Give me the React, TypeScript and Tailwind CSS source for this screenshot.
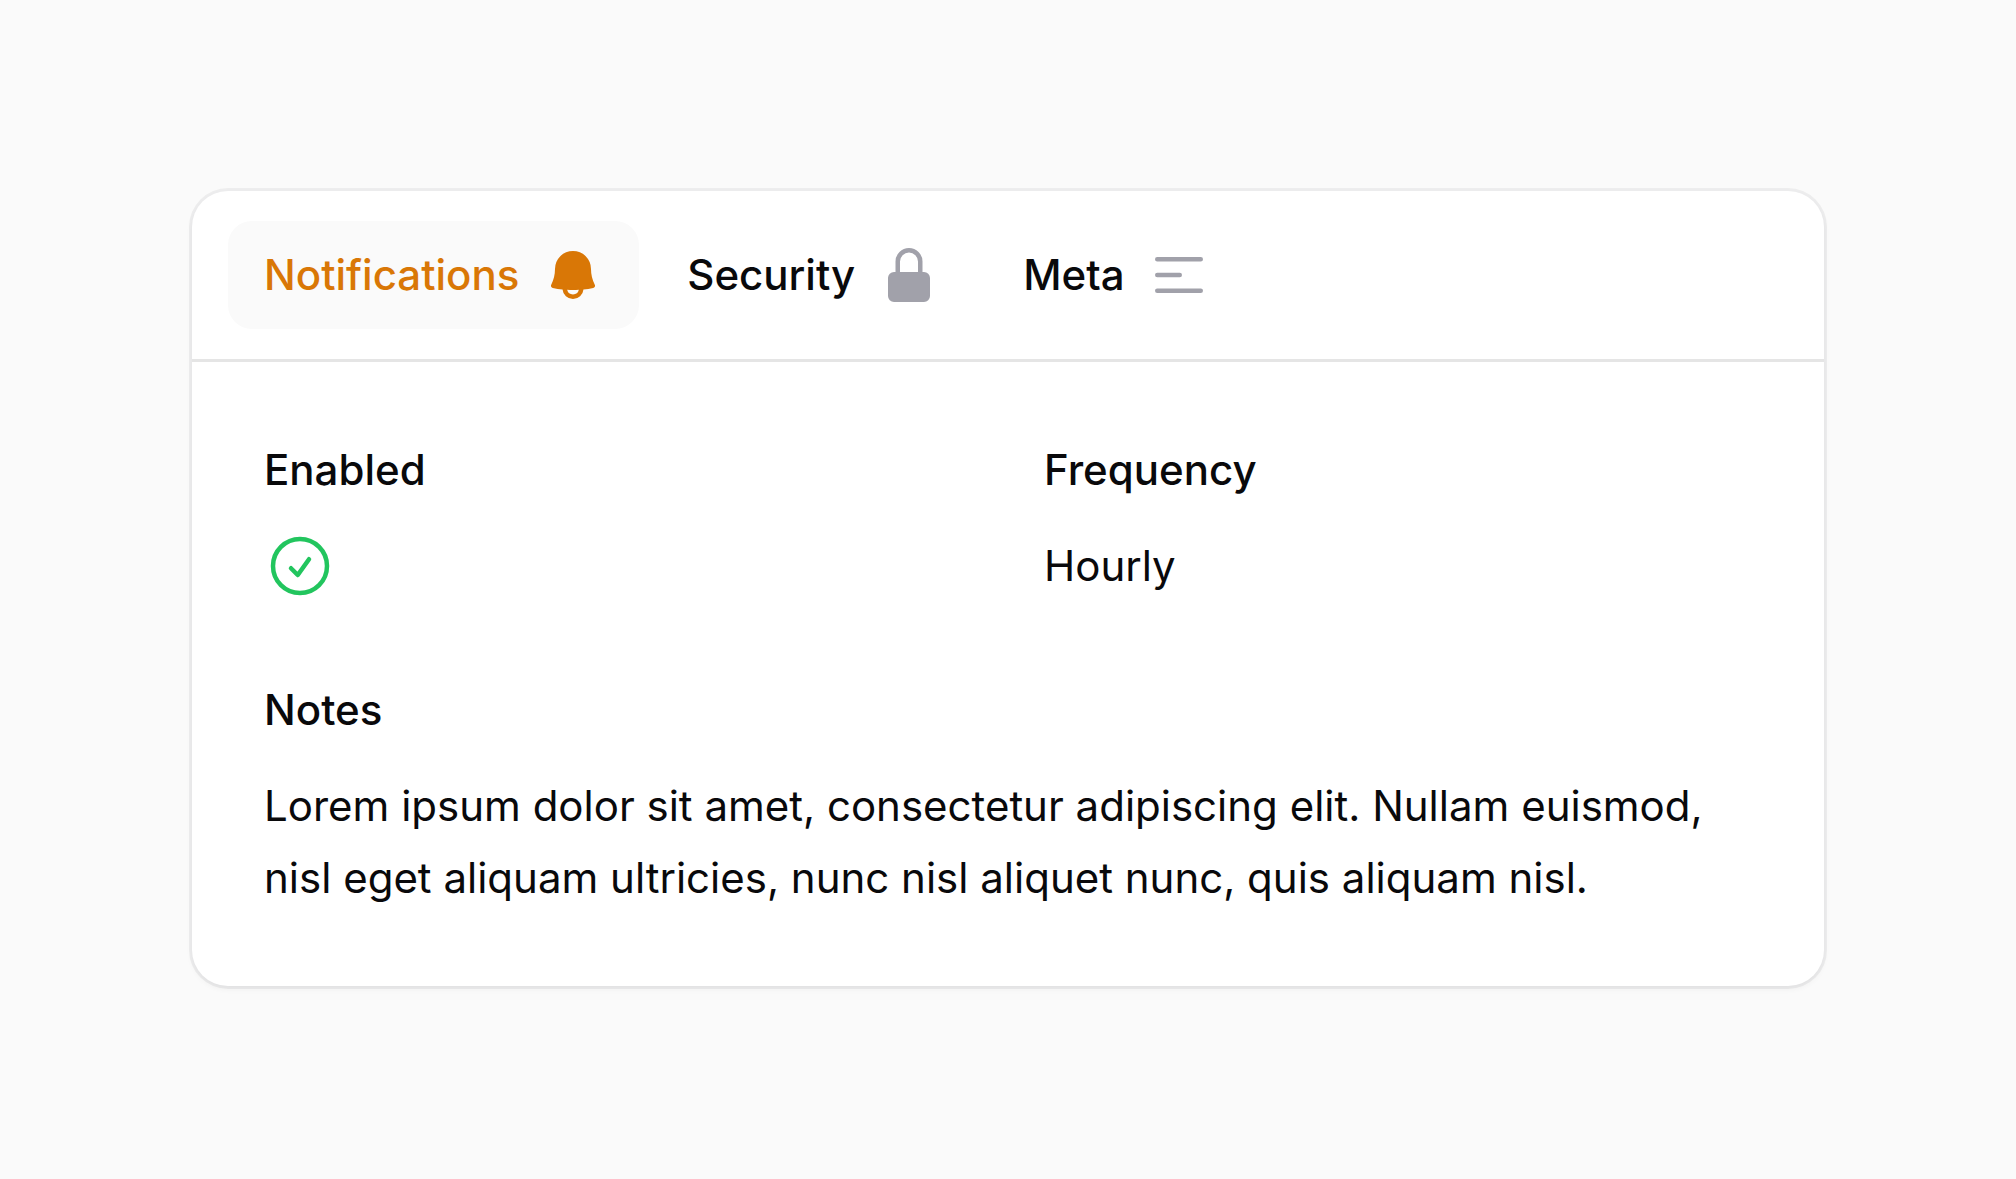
import { useState } from "react";
import clsx from "clsx";
import { HiMiniBars3CenterLeft, HiMiniBell, HiMiniLockClosed, HiOutlineCheckCircle } from "react-icons/hi2";

const TABS = [
  { id: "notifications", label: "Notifications", icon: HiMiniBell },
  { id: "security", label: "Security", icon: HiMiniLockClosed },
  { id: "meta", label: "Meta", icon: HiMiniBars3CenterLeft },
];

function Entry({ label, className, children }: { label: string; className?: string; children: React.ReactNode }) {
  return (
    <div className={clsx("grid gap-6", className)}>
      <dt className="font-medium">{label}</dt>
      <dd>{children}</dd>
    </div>
  );
}

export default function App() {
  const [active, setActive] = useState("notifications");

  return (
    <main className="min-h-screen bg-[#fafafa] px-48 py-[191px] font-['Inter',sans-serif] text-[42px] leading-[72px] text-[#09090b]">
      <div className="rounded-[36px] bg-white shadow-[0_3px_6px_0_rgb(0_0_0/0.05)] ring-3 ring-[#09090b]/5">
        <div role="tablist" aria-label="Settings" className="flex gap-3 border-b-3 border-[#e5e5e5] px-9 py-[30px]">
          {TABS.map(({ id, label, icon: Icon }) => (
            <button
              key={id}
              id={`tab-${id}`}
              type="button"
              role="tab"
              aria-selected={active === id}
              aria-controls="panel"
              onClick={() => setActive(id)}
              className={clsx(
                "flex items-center gap-6 rounded-3xl px-9 py-[18px] font-medium",
                active === id && "bg-[#fafafa] text-[#d97706]"
              )}
            >
              {label}
              <Icon
                aria-hidden="true"
                className={clsx("size-15 shrink-0", active === id ? "text-[#d97706]" : "text-[#a1a1aa]")}
              />
            </button>
          ))}
        </div>

        <div id="panel" role="tabpanel" aria-labelledby={`tab-${active}`} className="p-18">
          <dl className="grid grid-cols-2 gap-18">
            <Entry label="Enabled">
              <HiOutlineCheckCircle role="img" aria-label="Yes" className="size-18 text-[#22c55e]" />
            </Entry>
            <Entry label="Frequency">Hourly</Entry>
            <Entry label="Notes" className="col-span-2">
              Lorem ipsum dolor sit amet, consectetur adipiscing elit. Nullam euismod, nisl eget aliquam ultricies, nunc
              nisl aliquet nunc, quis aliquam nisl.
            </Entry>
          </dl>
        </div>
      </div>
    </main>
  );
}
